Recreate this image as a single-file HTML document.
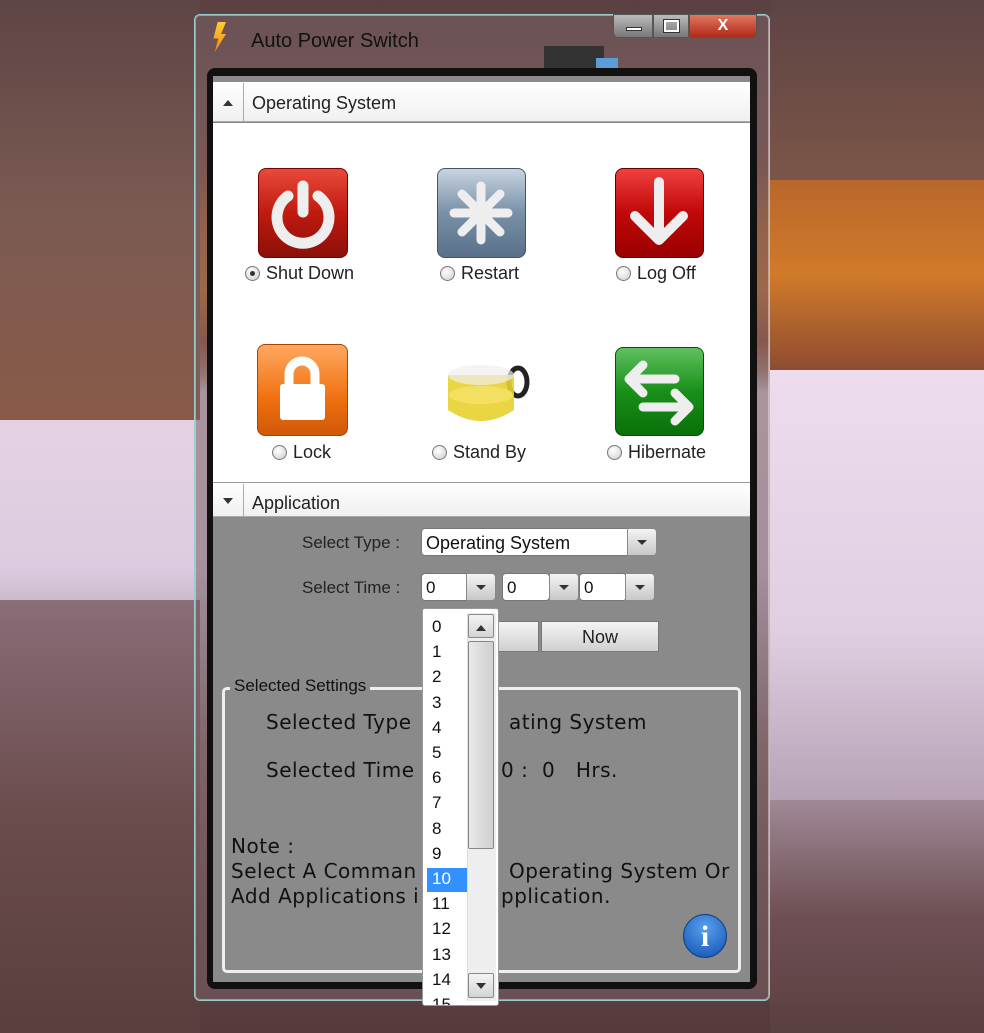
<!DOCTYPE html>
<html><head><meta charset="utf-8"><style>
*{margin:0;padding:0;box-sizing:border-box}
body{width:984px;height:1033px;overflow:hidden;position:relative;font-family:"Liberation Sans","DejaVu Sans",sans-serif;
background:linear-gradient(180deg,#5a4042 0%,#6e4d4b 10%,#7a4f43 16%,#b5652e 22%,#c8742c 28%,#9a5032 33%,#b0897f 36%,#e6d4e2 38%,#dccbe0 55%,#b8a6b6 62%,#8c6e72 72%,#6a4a4a 85%,#553a3c 100%)}
.abs{position:absolute}
.txt{font-size:17px;color:#222}
.icon{position:absolute;border-radius:8px}
.radio{display:inline-block;width:15px;height:15px;border-radius:50%;border:1px solid #777;background:radial-gradient(circle at 40% 35%,#fff,#ccc);vertical-align:-2px;margin-right:6px;position:relative}
.lbl{position:absolute;font-size:18px;color:#222;white-space:nowrap}
.combo{position:absolute;background:#fff;border:1px solid #777;border-radius:4px;height:28px;font-size:17px;padding:4px 0 0 4px;color:#111}
.cbtn{position:absolute;background:linear-gradient(#f4f4f4,#c8c8c8);border:1px solid #888;border-radius:0 4px 4px 0;height:28px;width:30px}
.cbtn:after{content:"";position:absolute;left:9px;top:11px;border:5px solid transparent;border-top:5px solid #333}
.gtxt{position:absolute;font-family:"DejaVu Sans",sans-serif;font-size:20px;letter-spacing:0.5px;color:#111;white-space:nowrap}
</style></head><body>
<div class="abs" style="left:0;top:0;width:200px;height:420px;background:linear-gradient(180deg,#5e4444,#7a5a52 50%,#8a5a48)"></div>
<div class="abs" style="left:0;top:600px;width:200px;height:433px;background:linear-gradient(180deg,#8a6e78,#6a4c4c 50%,#5a3e3e)"></div>
<div class="abs" style="left:770px;top:0;width:214px;height:180px;background:linear-gradient(180deg,#5c4444,#7c5548)"></div>
<div class="abs" style="left:770px;top:180px;width:214px;height:190px;background:linear-gradient(180deg,#b8672c,#d07a2a 50%,#8e4c30)"></div>
<div class="abs" style="left:770px;top:370px;width:214px;height:430px;background:linear-gradient(180deg,#ecdced,#e0cfe2 60%,#b7a2b5)"></div>
<div class="abs" style="left:770px;top:800px;width:214px;height:233px;background:linear-gradient(180deg,#a08896,#6e5054 50%,#5a3f40)"></div>
<div class="abs" style="left:194px;top:14px;width:576px;height:987px;border:1px solid #9cc;border-radius:6px;background:rgba(120,95,100,0.55);box-shadow:inset 0 0 0 1px rgba(255,255,255,.4)"></div>
<div class="abs" style="left:212px;top:22px;width:14px;height:30px;background:linear-gradient(#ffcc33,#f08a10);clip-path:polygon(40% 0,100% 0,65% 40%,100% 40%,20% 100%,45% 55%,10% 55%)"></div>
<div class="abs" style="left:251px;top:30px;font-size:20px;color:#111">Auto Power Switch</div>
<div class="abs" style="left:544px;top:46px;width:60px;height:22px;background:#333"></div>
<div class="abs" style="left:596px;top:58px;width:22px;height:14px;background:#5a9ed8"></div>
<div class="abs" style="left:613px;top:14px;width:40px;height:24px;border:1px solid #555;border-radius:0 0 0 5px;background:linear-gradient(#bbb,#777)"><div class="abs" style="left:12px;top:12px;width:16px;height:4px;background:#fff;border:1px solid #333"></div></div>
<div class="abs" style="left:653px;top:14px;width:36px;height:24px;border:1px solid #555;background:linear-gradient(#bbb,#777)"><div class="abs" style="left:10px;top:5px;width:15px;height:12px;border:2px solid #fff;outline:1px solid #333"></div></div>
<div class="abs" style="left:689px;top:14px;width:68px;height:24px;border:1px solid #555;border-radius:0 0 5px 0;background:linear-gradient(#e07860,#b02818);color:#fff;font-weight:bold;font-size:16px;text-align:center;line-height:22px">X</div>
<div class="abs" style="left:207px;top:68px;width:550px;height:921px;background:#111;border-radius:8px"></div>
<div class="abs" style="left:213px;top:76px;width:537px;height:906px;background:#8a8a8a"></div>
<div class="abs" style="left:213px;top:82px;width:537px;height:40px;background:linear-gradient(#fff,#f0f0f0);border-bottom:1px solid #aaa"></div>
<div class="abs" style="left:214px;top:83px;width:30px;height:38px;border-right:1px solid #aaa"><div class="abs" style="left:9px;top:12px;border:5px solid transparent;border-bottom:6px solid #333"></div></div>
<div class="abs" style="left:252px;top:93px;font-size:18px;color:#222">Operating System</div>
<div class="abs" style="left:213px;top:123px;width:537px;height:359px;background:#fff"></div>
<div class="icon" style="left:258px;top:168px;width:90px;height:90px;background:linear-gradient(#e84a3a,#c01a10 50%,#8a1008);border:1px solid #700"></div>
<svg class="abs" style="left:258px;top:168px" width="90" height="90"><path d="M30 28 A26 26 0 1 0 60 28" fill="none" stroke="#eee" stroke-width="11" stroke-linecap="round"/><line x1="45" y1="18" x2="45" y2="44" stroke="#eee" stroke-width="11" stroke-linecap="round"/></svg>
<div class="icon" style="left:437px;top:168px;width:89px;height:90px;background:linear-gradient(#c8d4e0,#7890a8 50%,#5a708a);border:1px solid #456"></div>
<svg class="abs" style="left:437px;top:168px" width="89" height="90"><g stroke="#eee" stroke-width="9" stroke-linecap="round"><line x1="44" y1="18" x2="44" y2="72"/><line x1="17" y1="45" x2="71" y2="45"/><line x1="25" y1="26" x2="63" y2="64"/><line x1="63" y1="26" x2="25" y2="64"/></g></svg>
<div class="icon" style="left:615px;top:168px;width:89px;height:90px;background:linear-gradient(#f04040,#c00808 50%,#900);border:1px solid #600"></div>
<svg class="abs" style="left:615px;top:168px" width="89" height="90"><path d="M44 14 V70 M20 48 L44 72 L68 48" fill="none" stroke="#eee" stroke-width="10" stroke-linecap="round" stroke-linejoin="round"/></svg>
<div class="icon" style="left:257px;top:344px;width:91px;height:92px;background:linear-gradient(#ffa860,#f07010 60%,#d05808);border:1px solid #a40"></div>
<svg class="abs" style="left:257px;top:344px" width="91" height="92"><path d="M32 42 V30 A13 13 0 0 1 58 30 V42" fill="none" stroke="#fff" stroke-width="9"/><rect x="23" y="40" width="45" height="36" rx="3" fill="#fff"/></svg>
<svg class="abs" style="left:440px;top:350px" width="90" height="85"><ellipse cx="78" cy="32" rx="9" ry="14" fill="none" stroke="#222" stroke-width="5"/><path d="M8 25 L74 25 L74 60 Q41 82 8 60 Z" fill="#e8d030" opacity=".9"/><ellipse cx="41" cy="25" rx="33" ry="10" fill="#eee" opacity=".7"/><ellipse cx="41" cy="45" rx="32" ry="9" fill="#f4e060"/></svg>
<div class="icon" style="left:615px;top:347px;width:89px;height:89px;background:linear-gradient(#60c060,#189018 50%,#0a700a);border:1px solid #050"></div>
<svg class="abs" style="left:615px;top:347px" width="89" height="89"><path d="M60 32 H16 M28 18 L14 32 L28 46 M28 60 H72 M60 46 L74 60 L60 74" fill="none" stroke="#eee" stroke-width="9" stroke-linecap="round" stroke-linejoin="round"/></svg>
<div class="lbl" style="left:245px;top:263px"><span class="radio"><span class="abs" style="left:4px;top:4px;width:5px;height:5px;border-radius:50%;background:#333"></span></span>Shut Down</div>
<div class="lbl" style="left:440px;top:263px"><span class="radio"></span>Restart</div>
<div class="lbl" style="left:616px;top:263px"><span class="radio"></span>Log Off</div>
<div class="lbl" style="left:272px;top:442px"><span class="radio"></span>Lock</div>
<div class="lbl" style="left:432px;top:442px"><span class="radio"></span>Stand By</div>
<div class="lbl" style="left:607px;top:442px"><span class="radio"></span>Hibernate</div>
<div class="abs" style="left:213px;top:482px;width:537px;height:35px;background:linear-gradient(#fff,#f0f0f0);border-top:1px solid #999;border-bottom:1px solid #aaa"></div>
<div class="abs" style="left:214px;top:484px;width:30px;height:32px;border-right:1px solid #aaa"><div class="abs" style="left:9px;top:14px;border:5px solid transparent;border-top:6px solid #333"></div></div>
<div class="abs" style="left:252px;top:493px;font-size:18px;color:#222">Application</div>
<div class="abs txt" style="left:302px;top:533px">Select Type :</div>
<div class="combo" style="left:421px;top:528px;width:210px;font-size:18px">Operating System</div>
<div class="cbtn" style="left:627px;top:528px"></div>
<div class="abs txt" style="left:302px;top:578px">Select Time :</div>
<div class="combo" style="left:421px;top:573px;width:48px">0</div><div class="cbtn" style="left:466px;top:573px"></div>
<div class="combo" style="left:502px;top:573px;width:48px">0</div><div class="cbtn" style="left:549px;top:573px"></div>
<div class="combo" style="left:579px;top:573px;width:48px">0</div><div class="cbtn" style="left:625px;top:573px"></div>
<div class="abs" style="left:480px;top:621px;width:59px;height:31px;background:linear-gradient(#f4f4f4,#d0d0d0);border:1px solid #777"></div>
<div class="abs" style="left:541px;top:621px;width:118px;height:31px;background:linear-gradient(#f4f4f4,#d0d0d0);border:1px solid #777;font-size:18px;text-align:center;line-height:30px;color:#222">Now</div>
<div class="abs" style="left:222px;top:687px;width:519px;height:286px;border:3px solid #eee;border-radius:5px"></div>
<div class="abs" style="left:230px;top:676px;background:#8a8a8a;padding:0 4px;font-size:17px;color:#111">Selected Settings</div>
<div class="gtxt" style="left:266px;top:710px">Selected Type</div>
<div class="gtxt" style="left:509px;top:710px">ating System</div>
<div class="gtxt" style="left:266px;top:758px">Selected Time</div>
<div class="gtxt" style="left:501px;top:758px">0 :&nbsp; 0&nbsp;&nbsp; Hrs.</div>
<div class="gtxt" style="left:231px;top:834px">Note :</div>
<div class="gtxt" style="left:231px;top:859px">Select A Comman</div>
<div class="gtxt" style="left:509px;top:859px">Operating System Or</div>
<div class="gtxt" style="left:231px;top:884px">Add Applications i</div>
<div class="gtxt" style="left:501px;top:884px">pplication.</div>
<div class="abs" style="left:683px;top:914px;width:44px;height:44px;border-radius:50%;background:radial-gradient(circle at 50% 30%,#5aa0f0,#1050b0);border:1px solid #0a3a80;color:#fff;font:bold 30px 'Liberation Serif',serif;text-align:center;line-height:44px">i</div>
<div class="abs" style="left:422px;top:608px;width:77px;height:398px;background:#fff;border:1px solid #999;border-radius:3px;overflow:hidden">
<div class="abs" style="left:4px;top:259px;width:40px;height:24px;background:#3390ff"></div>
<div style="position:absolute;left:9px;top:5px;font-size:17px;line-height:25.2px;color:#111">0<br>1<br>2<br>3<br>4<br>5<br>6<br>7<br>8<br>9<br><span style="color:#fff">10</span><br>11<br>12<br>13<br>14<br>15</div>
<div class="abs" style="left:44px;top:4px;width:29px;height:388px;background:#eee;border-left:1px solid #ddd"></div>
<div class="abs" style="left:45px;top:5px;width:26px;height:24px;background:linear-gradient(#f4f4f4,#d4d4d4);border:1px solid #888;border-radius:2px"><div class="abs" style="left:7px;top:5px;border:5px solid transparent;border-bottom:6px solid #333"></div></div>
<div class="abs" style="left:45px;top:32px;width:26px;height:208px;background:linear-gradient(90deg,#e8e8e8,#d0d0d0);border:1px solid #888;border-radius:2px"></div>
<div class="abs" style="left:45px;top:364px;width:26px;height:25px;background:linear-gradient(#f4f4f4,#d4d4d4);border:1px solid #888;border-radius:2px"><div class="abs" style="left:7px;top:9px;border:5px solid transparent;border-top:6px solid #333"></div></div>
</div>
</body></html>
